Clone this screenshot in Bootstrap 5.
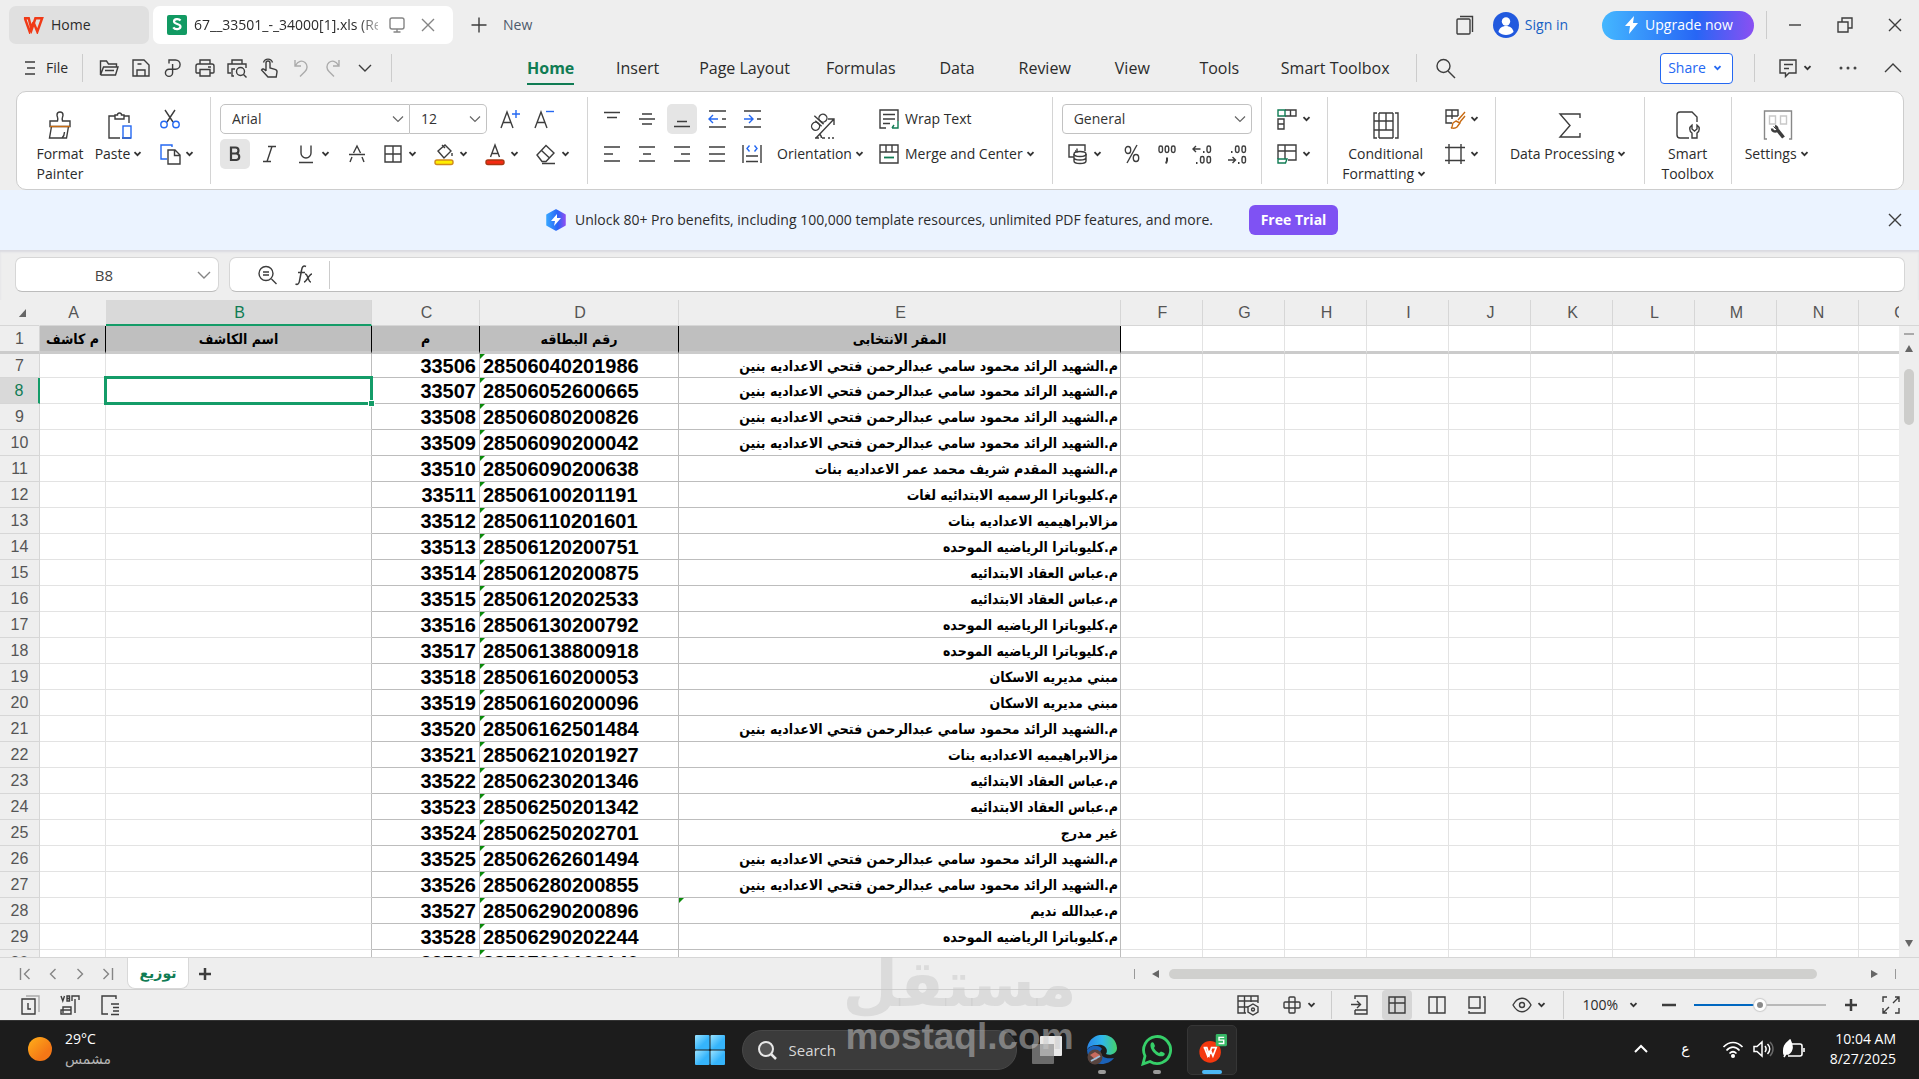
<!DOCTYPE html>
<html lang="en">
<head>
<meta charset="utf-8">
<meta name="viewport" content="width=device-width, initial-scale=1">
<title>Spreadsheet</title>
<link href="https://cdn.jsdelivr.net/npm/bootstrap@5.3.0/dist/css/bootstrap.min.css" rel="stylesheet">
<style>
:root{--ui:"Open Sans","Noto Sans","DejaVu Sans",sans-serif;--ink:#2b2b2b;--green:#107c54;--blue:#2468f2}
body{font:14px/20px var(--ui);color:var(--ink);background:#eee;height:100vh;overflow:hidden}
button{background:none;border:0;padding:0;color:inherit;font:inherit;line-height:20px;white-space:nowrap}
a{color:inherit;text-decoration:none;white-space:nowrap}
svg{display:block;flex:none}
.ic{width:24px;height:24px;fill:none;stroke:currentColor;stroke-width:1.4;color:#3d3d3d}
.ic.big{width:30px;height:30px}
.ic.faint{color:#ababab}
.ic.mid{color:#858585}
.caret{width:15px;height:12px;fill:none;stroke:#333;stroke-width:1.8}
.vsep{width:1px;height:28px;background:#ccc;flex:none}
/* title bar */
.titlebar{height:49px;padding:6px 12px 5px 9px}
.apptab{height:38px;border-radius:7px;background:#e0e0e0;width:140px;padding-left:14px;gap:7px}
.doctab{background:#fff;width:300px}
.docname{width:184px;overflow:hidden;white-space:nowrap;-webkit-mask-image:linear-gradient(90deg,#000 164px,transparent 196px);mask-image:linear-gradient(90deg,#000 164px,transparent 196px)}
.newbtn{color:#4d5a6b;gap:12px;margin-left:14px}
.signin{color:#1660c4;gap:6px;margin:0 34px 0 16px}
.upgrade{height:29px;width:152px;border-radius:15px;color:#fff;background:linear-gradient(90deg,#44b7ff,#2766f5 62%,#8a50f2);margin-right:12px}
.winctl{gap:26px}
/* menu row */
.menurow{height:42px;padding:0 14px 4px 18px}
.menurow>.vsep{margin:0 14px}
.menus{margin-left:101px}
.menuright{gap:21px}
.menuitem{min-width:87px;padding:0 18px;text-align:center;font-size:16px}
.menuitem.active span{font-weight:700;color:var(--green);border-bottom:2px solid var(--green);padding-bottom:4px}
.share{width:73px;height:31px;border:1px solid var(--blue);border-radius:4px;background:#fff;color:var(--blue)}
.share .caret{stroke:var(--blue)}
/* ribbon */
.ribbon{height:99px;margin:0 15px 0 16px;background:#fff;border:1px solid #cdcdcd;border-radius:10px;padding:5px 0}
.grp{border-right:1px solid #d4d4d4;padding-left:13px;padding-right:13px}
.grp.tight{padding-left:9px;padding-right:9px}
.grp.tight.loose{padding-right:14px}
.grp:last-child{border:0}
.bigbtn{display:flex;flex-direction:column;align-items:center;padding-top:13px}
.bigbtn svg.big{margin-bottom:4px}
.w60{min-width:60px}.w88{min-width:90px}.w122{min-width:122px}
.two{display:flex;flex-direction:column;gap:5px;padding-top:7px}
.two>*{height:30px}
.sq{width:30px;height:30px;display:flex;align-items:center;justify-content:center;border-radius:5px}
.sq.on{background:#e5e5e5}
.drop{width:39px;height:30px;display:flex;align-items:center}
.rowgap{display:flex;gap:12px}
.rowgap5{display:flex;gap:5px}
.rowgap10{display:flex;gap:10px}
.combo{height:30px;border:1px solid #c2c2c2;border-radius:5px;font:14px/20px var(--ui);color:#333;padding:0 26px 0 11px;background-color:#fff;background-size:12px 8px;background-position:right 5px center;background-image:url("data:image/svg+xml,%3Csvg xmlns='http://www.w3.org/2000/svg' viewBox='0 0 12 8'%3E%3Cpath d='M1 1.5 6 6.5 11 1.5' fill='none' stroke='%23666' stroke-width='1.2'/%3E%3C/svg%3E")}
.fontcombo{width:190px;border-radius:5px 0 0 5px}
.sizecombo{width:77px;border-left:0;border-radius:0 5px 5px 0}
/* banner */
.banner{height:60px;background:#ebf3ff;padding-right:12px}
.trial{width:89px;height:30px;border-radius:6px;background:#7f52f3;color:#fff;font-weight:700;margin-left:36px}
/* formula bar */
.fbar{height:50px;padding:7px 14px 8px 15px;gap:10px;box-shadow:inset 0 2px 2px #dadae0}
.fbox{background:#fff;border:1px solid #d6d6d6;border-bottom-color:#bcbcbc;border-radius:7px}
.namebox{width:204px}
.namebox input{width:176px;border:0;text-align:center;background:none;outline:0;color:#444;font-size:15px}
.fentry{padding-left:25px;gap:14px}
.fentry input{border:0;outline:0;background:none}
/* sheet */
.sheet{flex:1 1 0;min-height:0;overflow:hidden;border-bottom:1px solid #d6d6d6}
.titlebar,.menurow,.ribbon,.banner,.fbar,.tabsrow,.status,.taskbar{flex:none}
.gridwrap{overflow:hidden;background:#fff}
.gridtab{table-layout:fixed;width:1940px;border-collapse:separate;border-spacing:0}
.gridtab th,.gridtab td{height:26px;padding:0;border-right:1px solid #e3e3e3;border-bottom:1px solid #e3e3e3;line-height:24px;white-space:nowrap;overflow:hidden}
.gridtab thead th,.gridtab tbody th{background:#eee;color:#555;font:400 16px/24px "Liberation Sans",sans-serif;text-align:center;border-color:#d6d6d6}
.gridtab thead th{padding-left:2px;padding-top:1px}
.gridtab thead th:nth-child(-n+2){border-right-color:#eee}
.gridtab thead th.cur{background:#d9d9d9;color:var(--green);border-bottom:2px solid #149c68;line-height:23px}
.gridtab tbody th.cur{background:#d9d9d9;color:var(--green);border-right:2px solid #149c68}
.gridtab tr.frozen>*{height:28px;border-bottom:3px solid #cbcbcb}
.gridtab tr.frozen td.hd{background:#bfbfbf;border-right-color:#000;text-align:center;color:#000}
.gridtab tr.cut>*{height:24px;line-height:22px}
.gridtab td.n,.gridtab td.id{font:700 20px/22px "Liberation Sans",sans-serif;color:#000;border-color:#bdbdbd}
.gridtab td.n{text-align:right;padding-right:3px}
.gridtab td.id{padding-left:3px;position:relative}
.gridtab td.ar{border-color:#bdbdbd;padding-right:2px;text-align:right;position:relative}
.arab{font:700 14px/22px "DejaVu Sans Condensed","DejaVu Sans",sans-serif;color:#000}
.gridtab td.b{border-right-color:#bdbdbd}
.flag::before{content:"";position:absolute;left:0;top:0;border-top:5px solid #0a8a0a;border-right:5px solid transparent}
.gridtab td.sel{overflow:visible;position:relative}
.sel::before{content:"";position:absolute;inset:-2px;border:3px solid #149c68}
.sel::after{content:"";position:absolute;right:-4px;bottom:-4px;background:#149c68;border:1px solid #fff;box-sizing:content-box;width:5px;height:5px}
.vscroll{width:20px;flex:none;padding-top:25px}
.vthumb{width:10px;height:56px;border-radius:5px;background:#cdcdcb}
/* sheet tabs */
.tabsrow{height:32px;border-bottom:1px solid #cfcfcf;padding:0 23px 0 14px}
.sheetnav{gap:3px}
.sheettab{width:62px;height:31px;background:#fff;border:1px solid #d8d8d8;border-top:0;border-radius:0 0 8px 8px;color:var(--green);font:700 14px/28px "DejaVu Sans",sans-serif}
.hthumb{width:648px;height:10px;border-radius:5px;background:#d0d0ce}
.tri{width:10px;height:10px;fill:#666}
/* status bar */
.status{height:30px;padding:0 16px 0 18px}
.views{gap:10px}
.zoomr{-webkit-appearance:none;appearance:none;width:132px;height:14px;margin:0 13px;background:linear-gradient(#0067c0,#0067c0) 0 50%/66px 2px no-repeat,linear-gradient(#b9b9b9,#b9b9b9) 0 50%/100% 2px no-repeat}
.zoomr::-webkit-slider-thumb{-webkit-appearance:none;width:12px;height:12px;border-radius:50%;background:#8a8a8a;border:3px solid #fff;box-shadow:0 0 1px 1px #ccc}
.viewbtn{width:30px;height:30px;display:flex;align-items:center;justify-content:center}
.viewbtn.on{background:#d6d6d6;border-radius:4px}
/* taskbar */
.taskbar{height:59px;background:#1c1c1c;border-top:1px solid #333;color:#fff;position:relative}
.weather{padding-left:27px;gap:12px;position:absolute;left:0;top:8px}
.weather .cond{color:#b5b5b5}
.dock{padding-left:12px;gap:5px}
.searchpill{width:275px;height:40px;border-radius:20px;background:#3b3b3b;border:1px solid #484848;margin-left:12px;padding-left:12px;gap:8px}
.searchpill input{border:0;background:none;outline:0;color:#d8d8d8;font-size:15px;width:150px}
.searchpill input::placeholder{color:#d8d8d8;opacity:1}
.app{width:50px;height:50px;display:flex;align-items:center;justify-content:center;position:relative;border-radius:5px}
.app.on{background:#292929;border:1px solid #363636}
.app i{position:absolute;bottom:1px;width:8px;height:4px;border-radius:2px;background:#9a9a9a}
.app.on i{width:20px;background:#4cb8f5;bottom:0}
.tray{position:absolute;right:23px;top:8px}
.wmark{position:absolute;left:50%;bottom:20px;transform:translateX(-50%);color:rgba(200,200,200,.5);text-align:center;pointer-events:none;z-index:5}
.wm1{font:700 64px/62px "DejaVu Sans",sans-serif}
.wm2{font:700 37px/44px "Liberation Sans",sans-serif}
</style>
</head>
<body class="d-flex flex-column position-relative">
<svg width="0" height="0" class="position-absolute" aria-hidden="true"><defs>
<linearGradient id="gb" x1="0" x2="1"><stop stop-color="#36a3ff"/><stop offset=".6" stop-color="#2b62f6"/><stop offset="1" stop-color="#8950f2"/></linearGradient>
<linearGradient id="gw" x1="0" y1="0" x2="1" y2="1"><stop stop-color="#9be3ff"/><stop offset=".6" stop-color="#35b4fb"/></linearGradient>
<linearGradient id="gs" x1="0" y1="0" x2="1" y2="1"><stop stop-color="#ffb01a"/><stop offset=".7" stop-color="#f47716"/></linearGradient>
<linearGradient id="ge" x1="0" y1="0" x2="1" y2="0"><stop stop-color="#2a86e8"/><stop offset=".5" stop-color="#2fb6ec"/><stop offset="1" stop-color="#45d26a"/></linearGradient>
<symbol id="car" viewBox="0 0 15 12"><path d="M4.500 4.200 7.500 7.200 10.500 4.200"/></symbol>
<symbol id="x" viewBox="0 0 24 24"><path d="M6 6 18 18M18 6 6 18"/></symbol>
<symbol id="plus" viewBox="0 0 24 24"><path d="M12 4.500V19.500M4.500 12H19.500"/></symbol>
<symbol id="minus" viewBox="0 0 24 24"><path d="M6 12H18"/></symbol>
<symbol id="mon" viewBox="0 0 24 24"><rect x="5" y="5" width="14" height="11" rx="2"/><path d="M12 16v3M8.500 19h7"/></symbol>
<symbol id="burger" viewBox="0 0 24 24"><path d="M7 6H17M9 12H17M7 18H17"/></symbol>
<symbol id="open" viewBox="0 0 24 24"><path d="M3.500 19V5h6l2 3h8v3M3.500 19l3-8H21l-2.500 8H3.500M8 14.500h9"/></symbol>
<symbol id="save" viewBox="0 0 24 24"><path d="M9 20H4V4h11l5 5v11h-3M8.500 8h4M8 20v-6h8v6zM20 20h-4"/></symbol>
<symbol id="pdf" viewBox="0 0 24 24"><path d="M8 7.500V4h6.500a4.600 4.600 0 0 1 0 9.200H8a3.600 3.600 0 1 0 3.600 3.600V13M11.600 13V8"/></symbol>
<symbol id="print" viewBox="0 0 24 24"><path d="M7 8V4h10v4M7 17H4a1 1 0 0 1-1-1V10a2 2 0 0 1 2-2h14a2 2 0 0 1 2 2v6a1 1 0 0 1-1 1h-3M7 13.500h10V20H7zM15 11h3"/></symbol>
<symbol id="preview" viewBox="0 0 24 24"><path d="M7 8V4h10v4M6 17H3V8h18v4M9 20H7v-7h3"/><circle cx="15.500" cy="15.500" r="4"/><path d="m18.500 18.500 3 3"/></symbol>
<symbol id="hand" viewBox="0 0 24 24"><path d="M9 15V7a2 2 0 0 1 4 0v5l5 1.300c1.600.5 2.200 1.400 2 2.700l-.8 5H11L4.500 14c1-1.600 2.600-1.300 4.500 1M6.500 6.500a4.700 4.700 0 0 1 9 0"/></symbol>
<symbol id="undo" viewBox="0 0 24 24"><path d="M6 4v6h6M6.500 9.500C9 5 13 4 16 6.500s2.500 6.500 0 9l-5 5"/></symbol>
<symbol id="redo" viewBox="0 0 24 24"><path d="M18 4v6h-6M17.500 9.500C15 5 11 4 8 6.500s-2.500 6.500 0 9l5 5"/></symbol>
<symbol id="chev" viewBox="0 0 24 24"><path d="m6 9 6 6 6-6"/></symbol>
<symbol id="chevu" viewBox="0 0 24 24"><path d="m4 16 8-8 8 8"/></symbol>
<symbol id="search" viewBox="0 0 24 24"><circle cx="10.500" cy="10" r="6.500"/><path d="m15 15 7 7"/></symbol>
<symbol id="comment" viewBox="0 0 24 24"><path d="M4 4h16v13h-7l-3.500 3.500V17H4zM8 8.500h9M8 12.500h5"/></symbol>
<symbol id="win" viewBox="0 0 24 24"><path d="M5 9h10v10H5zM9 9V5h10v10h-4"/></symbol>
<symbol id="pages" viewBox="0 0 24 24"><rect x="4" y="6" width="13" height="15" rx="1"/><path d="M7 3.500h12.500V19"/></symbol>
<symbol id="brush" viewBox="0 0 30 30"><path d="M12.500 11c1-4-.5-4-.5-6a3 3 0 0 1 6 0c0 2-1.500 2-.5 6h7.500v5.500H5V11zM6.500 16.500 4.500 28h17l2-11.500M17 28c2-2 2.500-4 2.500-6"/><path d="M5 16.500h20" stroke="#c76a12"/></symbol>
<symbol id="paste" viewBox="0 0 30 30"><path d="M10 6H4v22h11M19 6h5v7M10 9V5h2.500a2 2 0 0 1 4 0H19v4zM17 28h9"/><rect x="18" y="16" width="8" height="12" stroke="#2468f2"/></symbol>
<symbol id="cut" viewBox="0 0 24 24"><path d="M7 3 15 15M17 3 9 15"/><g stroke="#2468f2"><circle cx="6" cy="17.500" r="3.200"/><circle cx="18" cy="17.500" r="3.200"/></g></symbol>
<symbol id="copy" viewBox="0 0 24 24"><path d="M14 5V3H3v14h6" stroke="#2468f2"/><path d="M10 8h7l5 5v9H10zM16.500 8v5.500H22"/></symbol>
<symbol id="ap" viewBox="0 0 24 24"><path d="m3 21 6-16 6 16M5 15.500h8"/><path d="M18 3v8M14 7h8" stroke="#2468f2"/></symbol>
<symbol id="am" viewBox="0 0 24 24"><path d="m3 21 6-16 6 16M5 15.500h8"/><path d="M14 4.500h8" stroke="#2468f2"/></symbol>
<symbol id="bold" viewBox="0 0 24 24"><path d="M8 5.500h4.500a3 3 0 0 1 0 6H8zM8 11.500h5.500a3.300 3.300 0 0 1 0 6.500H8z" stroke-width="2.200"/></symbol>
<symbol id="ital" viewBox="0 0 24 24"><path d="M10 4.500h8M5 19.500h8M14 4.500l-5 15"/></symbol>
<symbol id="und" viewBox="0 0 24 24"><path d="M7 3.500V11a5 5 0 0 0 10 0V3.500M5 20.500h14"/></symbol>
<symbol id="strike" viewBox="0 0 24 24"><path d="m8.500 11 3.500-7 3.500 7M4 12.500h16M7 15l-2 5M17 15l2 5"/></symbol>
<symbol id="bord" viewBox="0 0 24 24"><path d="M4 4h16v16H4zM12 4v16M4 12h16"/></symbol>
<symbol id="fill" viewBox="0 0 24 24"><path d="m6 9 7-6 6 6-7 7zM10 3l3 3M20 11v3"/><rect x="3" y="18" width="18" height="4.500" rx="2" fill="#ffee00" stroke="#cf8a1c"/></symbol>
<symbol id="fcol" viewBox="0 0 24 24"><path d="m7.500 15 4.500-12 4.500 12M9 11.500h6"/><rect x="3" y="18" width="18" height="4.500" rx="2" fill="#f42a12" stroke="#a83611"/></symbol>
<symbol id="erase" viewBox="0 0 24 24"><path d="m3 13 9-9.500 8 7.500-8 8.500H8zM7.500 8.500l8 7.500M8 21.500h13"/></symbol>
<symbol id="vt" viewBox="0 0 24 24"><path d="M4 5.500h16M7 10.500h10"/></symbol>
<symbol id="vm" viewBox="0 0 24 24"><path d="M7 7h10M4 12h16M7 17h10"/></symbol>
<symbol id="vb" viewBox="0 0 24 24"><path d="M7 14.500h10M4 19.500h16"/></symbol>
<symbol id="ind" viewBox="0 0 24 24"><path d="M4 4h17M4 20h17M17 12h4"/><path d="M13 12H4M8 8l-4 4 4 4" stroke="#2468f2"/></symbol>
<symbol id="ind2" viewBox="0 0 24 24"><path d="M4 4h17M4 20h17M17 12h4"/><path d="M4 12h9M9 8l4 4-4 4" stroke="#2468f2"/></symbol>
<symbol id="al" viewBox="0 0 24 24"><path d="M4 5h16M4 12h9M4 19h16"/></symbol>
<symbol id="ac" viewBox="0 0 24 24"><path d="M4 5h16M8 12h8M4 19h16"/></symbol>
<symbol id="arr" viewBox="0 0 24 24"><path d="M4 5h16M11 12h9M4 19h16"/></symbol>
<symbol id="aj" viewBox="0 0 24 24"><path d="M4 5h16M4 12h16M4 19h16"/></symbol>
<symbol id="dist" viewBox="0 0 24 24"><path d="M3 3v18M21 3v18M6 14h12M6 19.500h12"/><path d="M9.500 3.500 7 6.500l2.500 3M14.500 3.500l2.500 3-2.500 3" stroke="#2468f2"/></symbol>
<symbol id="orient" viewBox="0 0 30 30"><g transform="rotate(-48 12 14)"><circle cx="8" cy="13" r="4"/><path d="M12 9v8.500"/><circle cx="19" cy="13" r="4"/><path d="M15 5v12.500"/></g><path d="M9 28 27 9M21 9h6v6M8 28h4M15 28h3M21 28h2M25 28h2M12 24c2 1 2.500 2 2.500 4"/></symbol>
<symbol id="wrap" viewBox="0 0 24 24"><path d="M9 21H3V3h18v11M6 7.500h12M6 12h12M6 16.500h7"/><path d="M21 14v7h-6M17 18l-2 3" stroke="#107c54"/></symbol>
<symbol id="merge" viewBox="0 0 24 24"><path d="M3 3h18v18H3zM3 10h18M9 3v7M15 3v7"/><path d="M7 15.500h10" stroke="#107c54" stroke-width="1.800"/></symbol>
<symbol id="money" viewBox="0 0 24 24"><path d="M8 15H3V3h16v6"/><path d="M9 9h1M11 6.500v4"/><ellipse cx="14" cy="12" rx="6" ry="2.500"/><path d="M8 12v7c0 3.300 12 3.300 12 0v-7M8 15.500c0 3.300 12 3.300 12 0"/></symbol>
<symbol id="pct" viewBox="0 0 24 24"><ellipse cx="8" cy="8" rx="2.700" ry="3.500"/><ellipse cx="16" cy="16" rx="2.700" ry="3.500"/><path d="M17 3 7 21"/></symbol>
<symbol id="k" viewBox="0 0 24 24"><rect x="4" y="4" width="3.500" height="6.500" rx="1.700"/><rect x="10.200" y="4" width="3.500" height="6.500" rx="1.700"/><rect x="16.500" y="4" width="3.500" height="6.500" rx="1.700"/><path d="M12 15.500v3l-1 3" stroke-width="2"/></symbol>
<symbol id="dinc" viewBox="0 0 24 24"><path d="M10.500 7H3M6 4 3 7l3 3"/><path d="M13 10h1.500M6 21h1.500" stroke-width="2"/><rect x="17" y="4" width="3.500" height="6.500" rx="1.700"/><rect x="10.500" y="14.500" width="3.500" height="6.500" rx="1.700"/><rect x="17" y="14.500" width="3.500" height="6.500" rx="1.700"/></symbol>
<symbol id="ddec" viewBox="0 0 24 24"><path d="M3 18h7.500M7.500 15l3 3-3 3"/><path d="M13 21h1.500M6 10h1.500" stroke-width="2"/><rect x="17" y="14.500" width="3.500" height="6.500" rx="1.700"/><rect x="10.500" y="4" width="3.500" height="6.500" rx="1.700"/><rect x="17" y="4" width="3.500" height="6.500" rx="1.700"/></symbol>
<symbol id="rc" viewBox="0 0 24 24"><path d="M10 3h11v6H10M15.500 3v6M3 12h6v10H3zM3 17h6"/><path d="M3 3h7v6H3z" stroke="#107c54"/></symbol>
<symbol id="sheetop" viewBox="0 0 24 24"><path d="M3 17V3h18v15h-8M3 9h18M10 3v14"/><path d="M3 17h9l-1.500 4H3z" stroke="#107c54"/></symbol>
<symbol id="cond" viewBox="0 0 30 30"><path d="M8 3v25M22 3v25M8 3h14M8 28h14M8 11h14M8 20h14M15 3v8M15 11v9M6 3H3v25h3M3 11h5M3 20h5M24 3h3v25h-3"/></symbol>
<symbol id="cstyle" viewBox="0 0 24 24"><path d="M9 16H3V3h12v6M3 9h12M9 3v9"/><path d="M22 5l-7 8M13 14l4 2-3 4c-2 2-4 1-6 1 2-1 1-3 2-5zM22 9l-5 6" stroke="#c76a12"/></symbol>
<symbol id="frame" viewBox="0 0 24 24"><path d="M6 2v20M18 2v20M2 5.500h20M2 18.500h20"/></symbol>
<symbol id="sigma" viewBox="0 0 30 30"><path d="M25 8V4H5l10 11.500L5 27h20v-4"/></symbol>
<symbol id="stool" viewBox="0 0 30 30"><path d="M16 28H7a3 3 0 0 1-3-3V5a3 3 0 0 1 3-3h12l5 5v5"/><path d="M19 15v4l2.500 2 2.500-2v-4c3 2 3 6 0 8v5h-5v-5c-3-2-3-6 0-8z"/></symbol>
<symbol id="sett" viewBox="0 0 30 30"><path d="M4 29H1.500V1h27v28H26" stroke="#888"/><path d="M6.500 6h6v8h-6zM17.500 6h6v8h-6z" stroke="#c8c8c8"/><path d="m14.500 20 6 7.500" stroke-width="3.500"/><path d="M10.500 16.500l3 3" stroke-width="1"/><path d="M9 18.500c0 2.500 2.500 3.500 5 2.500 1-2 .5-4-2-5" stroke-width="2.500"/></symbol>
<symbol id="fmag" viewBox="0 0 24 24"><circle cx="11" cy="10.500" r="7"/><path d="m16.500 16 5 5M8 9h6M8 12h6"/></symbol>
<symbol id="first" viewBox="0 0 24 24"><path d="M6.500 6v12M15.500 7l-5 5 5 5"/></symbol>
<symbol id="prev" viewBox="0 0 24 24"><path d="m14.500 7-5 5 5 5"/></symbol>
<symbol id="next" viewBox="0 0 24 24"><path d="m9.500 7 5 5-5 5"/></symbol>
<symbol id="last" viewBox="0 0 24 24"><path d="M17.500 6v12M8.500 7l5 5-5 5"/></symbol>
<symbol id="s1" viewBox="0 0 24 24"><path d="M8 3h13v16" stroke="#aaa"/><path d="M4 6h13v15H4zM10 10v6h3"/></symbol>
<symbol id="s2" viewBox="0 0 24 24"><path d="m3 3 1.800 5L6.500 3M9 3h2.500v5H9zM9 5.500h2.500M14 8V3h7v4M17 6v14M5 20v-6h8v7H3v-4h10"/></symbol>
<symbol id="s3" viewBox="0 0 24 24"><path d="M18 6V3H4v18h6M13 11h8M15 14.500h6M15 18h6M13 21.500h8"/></symbol>
<symbol id="r1" viewBox="0 0 24 24"><path d="M10 20H2V3h20v7M2 8h20M2 14h10M8.500 3v17M15 3v6"/><path d="m17 11 5 3v5l-5 3-5-3v-5z"/><circle cx="17" cy="16.500" r="1.500"/></symbol>
<symbol id="r2" viewBox="0 0 24 24"><rect x="9" y="4" width="6" height="16" rx="1"/><rect x="4" y="9" width="16" height="6" rx="1"/></symbol>
<symbol id="r3" viewBox="0 0 24 24"><path d="M7 6V3h12v18H7v-4M7 17h12M3 11.500h9M9 8l3.500 3.500L9 15"/></symbol>
<symbol id="v1" viewBox="0 0 24 24"><path d="M4 4h16v16H4zM4 10h16M10 4v16"/></symbol>
<symbol id="v2" viewBox="0 0 24 24"><path d="M4 4h16v16H4zM12 4v16"/></symbol>
<symbol id="v3" viewBox="0 0 24 24"><path d="M4 4h11v11H4zM18 4h2v16H4v-2"/></symbol>
<symbol id="eye" viewBox="0 0 24 24"><path d="M3 12c5-9 13-9 18 0-5 9-13 9-18 0z"/><circle cx="12" cy="12" r="2.500"/></symbol>
<symbol id="full" viewBox="0 0 24 24"><path d="M4 9V4h4M16 4h4v5M4 15v5h4M16 20h4v-5M14 10l6-6M10 14l-6 6"/></symbol>
</defs></svg>

<header class="titlebar d-flex align-items-center">
  <a href="#" class="apptab d-flex align-items-center"><svg width="21" height="18" viewBox="0 0 22 18" fill="none" stroke="#f03a17" stroke-width="2.600"><path d="M1 2h5l3 12L13 2h7l-5 14-4-10M2 2l5 14 4-10"/></svg><span>Home</span></a>
  <div class="apptab doctab d-flex align-items-center ms-1">
    <svg width="20" height="20" viewBox="0 0 20 20"><rect width="20" height="20" rx="2" fill="#129a63"/><path d="M13.500 5.500C12 3.500 7 3.500 7 6.500s6.500 2 6.500 5-5.500 3.500-7.200.8" fill="none" stroke="#fff" stroke-width="2.200"/></svg>
    <span class="docname">67__33501_-_34000[1].xls (Re</span>
    <svg class="ic mid"><use href="#mon"/></svg>
    <button aria-label="Close tab"><svg class="ic mid"><use href="#x"/></svg></button>
  </div>
  <button class="newbtn d-flex align-items-center"><svg class="ic" stroke-width="2"><use href="#plus"/></svg>New</button>
  <div class="d-flex align-items-center ms-auto">
    <button aria-label="Windows"><svg class="ic"><use href="#pages"/></svg></button>
    <button class="signin d-flex align-items-center"><svg width="26" height="26" viewBox="0 0 26 26"><circle cx="13" cy="13" r="13" fill="#2159de"/><circle cx="13" cy="9.500" r="4.200" fill="#fff"/><path d="M5.500 20c1-8 14-8 15 0-4 4-11 4-15 0z" fill="#fff"/></svg>Sign in</button>
    <button class="upgrade d-flex align-items-center justify-content-center gap-1"><svg width="18" height="18" viewBox="0 0 18 18"><path d="M11 0 2 10h5L6 18l9-11h-5z" fill="#fff"/></svg>Upgrade now</button>
    <div class="vsep me-3"></div>
    <div class="winctl d-flex">
      <button aria-label="Minimize"><svg class="ic"><use href="#minus"/></svg></button>
      <button aria-label="Restore"><svg class="ic"><use href="#win"/></svg></button>
      <button aria-label="Close"><svg class="ic"><use href="#x"/></svg></button>
    </div>
  </div>
</header>

<nav class="menurow d-flex align-items-center">
  <button class="d-flex align-items-center"><svg class="ic me-1"><use href="#burger"/></svg>File</button>
  <div class="vsep"></div>
  <div class="d-flex gap-2">
    <button aria-label="Open"><svg class="ic"><use href="#open"/></svg></button>
    <button aria-label="Save"><svg class="ic"><use href="#save"/></svg></button>
    <button aria-label="Export PDF"><svg class="ic"><use href="#pdf"/></svg></button>
    <button aria-label="Print"><svg class="ic"><use href="#print"/></svg></button>
    <button aria-label="Preview"><svg class="ic"><use href="#preview"/></svg></button>
    <button aria-label="Touch"><svg class="ic"><use href="#hand"/></svg></button>
    <button aria-label="Undo"><svg class="ic faint"><use href="#undo"/></svg></button>
    <button aria-label="Redo"><svg class="ic faint"><use href="#redo"/></svg></button>
    <button aria-label="More"><svg class="ic"><use href="#chev"/></svg></button>
  </div>
  <div class="vsep"></div>
  <div class="menus d-flex align-items-center">
    <a href="#" class="menuitem active"><span>Home</span></a><a href="#" class="menuitem">Insert</a><a href="#" class="menuitem">Page Layout</a><a href="#" class="menuitem">Formulas</a><a href="#" class="menuitem">Data</a><a href="#" class="menuitem">Review</a><a href="#" class="menuitem">View</a><a href="#" class="menuitem">Tools</a><a href="#" class="menuitem">Smart Toolbox</a>
    <div class="vsep ms-2 me-3"></div>
    <button aria-label="Search"><svg class="ic"><use href="#search"/></svg></button>
  </div>
  <div class="menuright d-flex align-items-center ms-auto">
    <button class="share d-flex align-items-center justify-content-center gap-1">Share<svg class="caret"><use href="#car"/></svg></button>
    <div class="vsep"></div>
    <button class="drop" aria-label="Comments"><svg class="ic"><use href="#comment"/></svg><svg class="caret"><use href="#car"/></svg></button>
    <button aria-label="More options"><svg width="24" height="24" viewBox="0 0 24 24" fill="#444"><circle cx="5" cy="12" r="1.500"/><circle cx="12" cy="12" r="1.500"/><circle cx="19" cy="12" r="1.500"/></svg></button>
    <button aria-label="Collapse ribbon"><svg class="ic"><use href="#chevu"/></svg></button>
  </div>
</nav>

<section class="ribbon d-flex">
  <div class="grp d-flex">
    <button class="bigbtn w60"><svg class="ic big"><use href="#brush"/></svg><span>Format<br>Painter</span></button>
    <button class="bigbtn w60"><svg class="ic big"><use href="#paste"/></svg><span class="d-flex align-items-center">Paste<svg class="caret"><use href="#car"/></svg></span></button>
    <div class="two ms-2">
      <button aria-label="Cut"><svg class="ic"><use href="#cut"/></svg></button>
      <button class="drop" aria-label="Copy"><svg class="ic"><use href="#copy"/></svg><svg class="caret"><use href="#car"/></svg></button>
    </div>
  </div>
  <div class="grp tight loose two">
    <div class="d-flex">
      <select class="form-select combo fontcombo" aria-label="Font"><option>Arial</option></select>
      <select class="form-select combo sizecombo" aria-label="Size"><option>12</option></select>
      <button class="sq ms-2" aria-label="Grow font"><svg class="ic"><use href="#ap"/></svg></button>
      <button class="sq ms-1" aria-label="Shrink font"><svg class="ic"><use href="#am"/></svg></button>
    </div>
    <div class="rowgap">
      <div class="d-flex gap-2"><button class="sq on" aria-label="Bold"><svg class="ic"><use href="#bold"/></svg></button><button aria-label="Italic"><svg class="ic"><use href="#ital"/></svg></button></div>
      <button class="drop" aria-label="Underline"><svg class="ic"><use href="#und"/></svg><svg class="caret"><use href="#car"/></svg></button>
      <button aria-label="Strikethrough"><svg class="ic"><use href="#strike"/></svg></button>
      <button class="drop" aria-label="Borders"><svg class="ic"><use href="#bord"/></svg><svg class="caret"><use href="#car"/></svg></button>
      <button class="drop" aria-label="Fill colour"><svg class="ic"><use href="#fill"/></svg><svg class="caret"><use href="#car"/></svg></button>
      <button class="drop" aria-label="Font colour"><svg class="ic"><use href="#fcol"/></svg><svg class="caret"><use href="#car"/></svg></button>
      <button class="drop" aria-label="Clear"><svg class="ic"><use href="#erase"/></svg><svg class="caret"><use href="#car"/></svg></button>
    </div>
  </div>
  <div class="grp tight loose rowgap10">
    <div class="two">
      <div class="rowgap5"><button class="sq" aria-label="Top"><svg class="ic"><use href="#vt"/></svg></button><button class="sq" aria-label="Middle"><svg class="ic"><use href="#vm"/></svg></button><button class="sq on" aria-label="Bottom"><svg class="ic"><use href="#vb"/></svg></button><button class="sq" aria-label="Outdent"><svg class="ic"><use href="#ind"/></svg></button><button class="sq" aria-label="Indent"><svg class="ic"><use href="#ind2"/></svg></button></div>
      <div class="rowgap5"><button class="sq" aria-label="Left"><svg class="ic"><use href="#al"/></svg></button><button class="sq" aria-label="Center"><svg class="ic"><use href="#ac"/></svg></button><button class="sq" aria-label="Right"><svg class="ic"><use href="#arr"/></svg></button><button class="sq" aria-label="Justify"><svg class="ic"><use href="#aj"/></svg></button><button class="sq" aria-label="Distribute"><svg class="ic"><use href="#dist"/></svg></button></div>
    </div>
    <button class="bigbtn w88"><svg class="ic big"><use href="#orient"/></svg><span class="d-flex align-items-center">Orientation<svg class="caret"><use href="#car"/></svg></span></button>
    <div class="two">
      <button class="d-flex align-items-center"><svg class="ic me-1"><use href="#wrap"/></svg>Wrap Text</button>
      <button class="d-flex align-items-center"><svg class="ic me-1"><use href="#merge"/></svg>Merge and Center<svg class="caret"><use href="#car"/></svg></button>
    </div>
  </div>
  <div class="grp tight two">
    <select class="form-select combo fontcombo rounded-1" aria-label="Number format"><option>General</option></select>
    <div class="rowgap5"><button class="drop me-auto ms-1" aria-label="Currency"><svg class="ic"><use href="#money"/></svg><svg class="caret"><use href="#car"/></svg></button><button class="sq" aria-label="Percent"><svg class="ic"><use href="#pct"/></svg></button><button class="sq" aria-label="Comma style"><svg class="ic"><use href="#k"/></svg></button><button class="sq" aria-label="Increase decimal"><svg class="ic"><use href="#dinc"/></svg></button><button class="sq" aria-label="Decrease decimal"><svg class="ic"><use href="#ddec"/></svg></button></div>
  </div>
  <div class="grp two">
    <button class="drop" aria-label="Rows and columns"><svg class="ic"><use href="#rc"/></svg><svg class="caret"><use href="#car"/></svg></button>
    <button class="drop" aria-label="Worksheet"><svg class="ic"><use href="#sheetop"/></svg><svg class="caret"><use href="#car"/></svg></button>
  </div>
  <div class="grp rowgap">
    <button class="bigbtn w88"><svg class="ic big"><use href="#cond"/></svg><span>Conditional</span><span class="d-flex align-items-center">Formatting<svg class="caret"><use href="#car"/></svg></span></button>
    <div class="two">
      <button class="drop" aria-label="Cell styles"><svg class="ic"><use href="#cstyle"/></svg><svg class="caret"><use href="#car"/></svg></button>
      <button class="drop" aria-label="Format cells"><svg class="ic"><use href="#frame"/></svg><svg class="caret"><use href="#car"/></svg></button>
    </div>
  </div>
  <div class="grp"><button class="bigbtn w122"><svg class="ic big"><use href="#sigma"/></svg><span class="d-flex align-items-center">Data Processing<svg class="caret"><use href="#car"/></svg></span></button></div>
  <div class="grp"><button class="bigbtn w60"><svg class="ic big"><use href="#stool"/></svg><span>Smart<br>Toolbox</span></button></div>
  <div class="grp"><button class="bigbtn w60"><svg class="ic big"><use href="#sett"/></svg><span class="d-flex align-items-center">Settings<svg class="caret"><use href="#car"/></svg></span></button></div>
</section>

<section class="banner d-flex align-items-center">
  <div class="d-flex align-items-center mx-auto">
    <svg class="me-2" width="22" height="22" viewBox="0 0 22 22"><path d="M11 1 20 6v10l-9 5-9-5V6z" fill="url(#gb)" stroke="url(#gb)" stroke-width="1.500" stroke-linejoin="round"/><path d="m12 5-6 7h4l-1 5 7-8h-4z" fill="#fff"/></svg>
    <span>Unlock 80+ Pro benefits, including 100,000 template resources, unlimited PDF features, and more.</span>
    <button class="trial">Free Trial</button>
  </div>
  <button aria-label="Dismiss"><svg class="ic"><use href="#x"/></svg></button>
</section>

<section class="fbar d-flex">
  <div class="fbox namebox d-flex align-items-center"><input value="B8" aria-label="Name box"><svg class="ic mid"><use href="#chev"/></svg></div>
  <div class="fbox fentry flex-fill d-flex align-items-center">
    <svg class="ic"><use href="#fmag"/></svg>
    <svg width="22" height="24" viewBox="0 0 22 24" fill="none" stroke="#3d3d3d" stroke-width="1.500"><path d="M13 3.500c-3-1.500-4 1-4.500 4L6.500 18c-.5 3-2 4-4 3M5 9.500h7M12 11c3-.5 3 8 6 8M19 11c-3 0-5 7.500-8 8"/></svg>
    <div class="vsep"></div>
    <input class="flex-fill" aria-label="Formula">
  </div>
</section>

<main class="sheet d-flex">
  <div class="gridwrap flex-fill">
    <table class="gridtab">
      <colgroup id="cols"></colgroup>
      <thead><tr id="letters"></tr></thead>
      <tbody id="rows"></tbody>
    </table>
  </div>
  <div class="vscroll d-flex flex-column align-items-center">
    <svg width="20" height="10" viewBox="0 0 20 10"><path d="M0 .5h20" stroke="#d6d6d6"/><path d="M5 9h10" stroke="#aaa" stroke-width="2"/></svg>
    <svg class="tri mt-2 mb-3" viewBox="0 0 10 10"><path d="M5 2 9 9H1z"/></svg>
    <div class="vthumb"></div>
    <svg class="tri mt-auto mb-2" viewBox="0 0 10 10"><path d="M5 8 9 1H1z"/></svg>
  </div>
</main>

<section class="tabsrow d-flex align-items-center">
  <div class="sheetnav d-flex me-2">
    <button aria-label="First sheet"><svg class="ic mid"><use href="#first"/></svg></button><button aria-label="Previous sheet"><svg class="ic mid"><use href="#prev"/></svg></button><button aria-label="Next sheet"><svg class="ic mid"><use href="#next"/></svg></button><button aria-label="Last sheet"><svg class="ic mid"><use href="#last"/></svg></button>
  </div>
  <button class="sheettab" dir="rtl">توزيع</button>
  <button class="ms-1" aria-label="Add sheet"><svg class="ic" viewBox="0 0 24 24"><path d="M12 6v12M6 12h12" stroke-width="2.500"/></svg></button>
  <div class="d-flex align-items-center ms-auto">
    <svg width="1" height="10"><path d="M.5 0v10" stroke="#999"/></svg>
    <svg class="tri ms-3 me-2" viewBox="0 0 10 10"><path d="M1 5 8 1v8z"/></svg>
    <div class="hthumb me-5"></div>
    <svg class="tri ms-1 me-3" viewBox="0 0 10 10"><path d="M9 5 2 1v8z"/></svg>
    <svg width="1" height="10"><path d="M.5 0v10" stroke="#999"/></svg>
  </div>
</section>

<footer class="status d-flex align-items-center">
  <button class="me-3" aria-label="History"><svg class="ic"><use href="#s1"/></svg></button>
  <button class="me-3" aria-label="Macro"><svg class="ic"><use href="#s2"/></svg></button>
  <button aria-label="Outline"><svg class="ic"><use href="#s3"/></svg></button>
  <div class="d-flex align-items-center ms-auto">
    <button class="me-3" aria-label="Table settings"><svg class="ic"><use href="#r1"/></svg></button>
    <button class="drop ms-1 me-2" aria-label="Reading layout"><svg class="ic"><use href="#r2"/></svg><svg class="caret"><use href="#car"/></svg></button>
    <div class="vsep ms-1 me-3"></div>
    <div class="views d-flex align-items-center">
      <button aria-label="Mobile"><svg class="ic"><use href="#r3"/></svg></button>
      <button class="viewbtn on" aria-label="Normal view"><svg class="ic"><use href="#v1"/></svg></button>
      <button class="viewbtn" aria-label="Page view"><svg class="ic"><use href="#v2"/></svg></button>
      <button class="viewbtn" aria-label="Page breaks"><svg class="ic"><use href="#v3"/></svg></button>
      <button class="drop ms-2 me-1" aria-label="Eye care"><svg class="ic"><use href="#eye"/></svg><svg class="caret"><use href="#car"/></svg></button>
      <div class="vsep me-2"></div>
      <button class="d-flex align-items-center gap-2">100%<svg class="caret"><use href="#car"/></svg></button>
    </div>
    <button class="ms-3" aria-label="Zoom out"><svg class="ic"><path d="M5 12h14" stroke-width="2.500"/></svg></button>
    <input type="range" class="zoomr" min="0" max="100" value="50" aria-label="Zoom">
    <button aria-label="Zoom in"><svg class="ic"><path d="M6 12h12M12 6v12" stroke-width="2.500"/></svg></button>
    <button class="ms-3" aria-label="Full screen"><svg class="ic"><use href="#full"/></svg></button>
  </div>
</footer>

<div class="taskbar d-flex justify-content-center align-items-center">
  <div class="weather d-flex align-items-center">
    <svg width="26" height="26" viewBox="0 0 26 26"><circle cx="13" cy="13" r="12" fill="url(#gs)"/></svg>
    <div><div>29°C</div><div class="cond" dir="rtl">مشمس</div></div>
  </div>
  <div class="dock d-flex align-items-center">
    <svg width="30" height="30" viewBox="0 0 30 30" fill="url(#gw)"><rect width="14.500" height="14.500" rx="1"/><rect x="15.500" width="14.500" height="14.500" rx="1"/><rect y="15.500" width="14.500" height="14.500" rx="1"/><rect x="15.500" y="15.500" width="14.500" height="14.500" rx="1"/></svg>
    <label class="searchpill d-flex align-items-center"><svg class="ic" viewBox="0 0 24 24"><circle cx="11" cy="11" r="7" stroke="#e8e8e8" stroke-width="2" fill="#555"/><path d="m16 16 5 5" stroke="#e8e8e8" stroke-width="2.500"/></svg><input placeholder="Search" aria-label="Search"></label>
    <button class="app" aria-label="Task view"><svg width="30" height="28" viewBox="0 0 30 28"><rect x="0" y="8" width="22" height="20" rx="1" fill="#6b6b6b"/><rect x="8" width="22" height="20" rx="1" fill="#e9e9e9"/><path d="M8 8h14v12H8z" fill="#aaa"/></svg></button>
    <button class="app" aria-label="Browser"><svg width="30" height="30" viewBox="0 0 30 30"><path d="M0 15C1-5 29-5 30 13c0 6-7 8-11 6 3-5-2-10-8-9C5 10 1 12 0 15z" fill="url(#ge)"/><path d="M0 15c3-5 12-6 15-1-4 3-1 11 12 9-6 9-26 9-27-8z" fill="#1b62b8"/><circle cx="8" cy="22" r="7.500" fill="#57443f"/><path d="m3 20 5-3 5 3-4 5z" fill="#c76b5e"/><path d="m4 26 9-5" stroke="#9fc0da" stroke-width="2"/></svg><i></i></button>
    <button class="app" aria-label="Chat"><svg width="32" height="32" viewBox="0 0 32 32"><path d="M2 30l2-8a13.500 13.500 0 1 1 5 5.500z" fill="none" stroke="#36cf69" stroke-width="2.800"/><path d="M10 9c2-2 3 0 4 3l-1 2c1 2 3 4 5 5l2-1.500c3 1 5 2 3 4-6 4-16-7-13-12.500z" fill="#36cf69"/></svg><i></i></button>
    <button class="app on" aria-label="Office"><svg width="30" height="32" viewBox="0 0 32 34"><circle cx="14" cy="19" r="11.500" fill="#f4380f"/><path d="M7 14.500h3.500l2.500 8 2.500-8h5l-3.500 9-2.500-6M8 14.500l3.500 9 2.500-6" fill="none" stroke="#fff" stroke-width="1.800"/><rect x="20" y="0" width="12" height="13" rx="1.500" fill="#36b866"/><path d="M29 3.500h-5.500v3h5v3.500H23" fill="none" stroke="#fff" stroke-width="1.500"/></svg><i></i></button>
  </div>
  <div class="tray d-flex align-items-center">
    <svg width="16" height="16" viewBox="0 0 16 16" fill="none" stroke="#fff" stroke-width="2"><path d="m2 11 6-6 6 6"/></svg>
    <span class="mx-4 px-2" lang="ar">ع</span>
    <svg class="me-2" width="22" height="20" viewBox="0 0 22 20" fill="none" stroke="#fff" stroke-width="1.700"><path d="M1.500 8C7 2 15 2 20.500 8M4.500 11.500c4-4.500 9-4.500 13 0M7.500 14.500c2.500-2.500 4.500-2.500 7 0"/><circle cx="11" cy="17" r="1.200" fill="#fff"/></svg>
    <svg class="me-2" width="22" height="20" viewBox="0 0 22 20" fill="none" stroke="#fff" stroke-width="1.500"><path d="M2 7.500h3L10 3v14l-5-4.500H2zM13 7c1.500 2 1.500 4 0 6M15.500 5c3 3 3 7 0 10"/><path d="M18 3c4 4 4 10 0 14" stroke="#666"/></svg>
    <svg class="me-4" width="24" height="20" viewBox="0 0 24 20" fill="none" stroke="#fff" stroke-width="1.600"><path d="M10 5h8a2 2 0 0 1 2 2v8a2 2 0 0 1-2 2H6M22 9v4"/><path d="M2 15C1 8 3 5 8 1c3 6 3 11-2 14zM2 18l4-7" fill="#fff"/></svg>
    <div class="text-end">10:04 AM<br>8/27/2025</div>
  </div>
</div>

<div class="wmark"><div class="wm1" dir="rtl">مستقل</div><div class="wm2">mostaql.com</div></div>

<script src="https://cdn.jsdelivr.net/npm/bootstrap@5.3.0/dist/js/bootstrap.bundle.min.js"></script>
<script>
const widths = [40, 66, 266, 108, 199, 442, ...Array(10).fill(82)];
const names = ['', ...'ABCDEFGHIJKLMNO'];
const S1 = 'م.الشهيد الرائد محمود سامي عبدالرحمن فتحي الاعداديه بنين';
const S2 = 'م.الشهيد المقدم شريف محمد عمر الاعداديه بنات';
const S3 = 'م.كليوباترا الرسميه الابتدائيه لغات';
const S4 = 'مزالابراهيميه الاعداديه بنات';
const S5 = 'م.كليوباترا الرياضيه الموحده';
const S6 = 'م.عباس العقاد الابتدائيه';
const S7 = 'مبني مديريه الاسكان';
const S8 = 'غير مدرج';
const data = [
  ['28506040201986', S1], ['28506052600665', S1], ['28506080200826', S1], ['28506090200042', S1],
  ['28506090200638', S2], ['28506100201191', S3], ['28506110201601', S4], ['28506120200751', S5],
  ['28506120200875', S6], ['28506120202533', S6], ['28506130200792', S5], ['28506138800918', S5],
  ['28506160200053', S7], ['28506160200096', S7], ['28506162501484', S1], ['28506210201927', S4],
  ['28506230201346', S6], ['28506250201342', S6], ['28506250202701', S8], ['28506262601494', S1],
  ['28506280200855', S1], ['28506290200896', 'م.عبدالله نديم'], ['28506290202244', S5], ['28507000102140', S8]
];
const blank = '<td></td>'.repeat(10);
document.getElementById('cols').innerHTML = widths.map(w => `<col style="width:${w}px">`).join('');
document.getElementById('letters').innerHTML = names.map((n, i) =>
  i ? `<th scope="col"${n === 'B' ? ' class="cur"' : ''}>${n}</th>`
    : '<th><svg class="ms-3" width="8" height="9" viewBox="0 0 9 10"><path d="M9 0v9H1z" fill="#666"/></svg></th>').join('');
const heads = ['م كاشف', 'اسم الكاشف', 'م', 'رقم البطاقه', 'المقر الانتخابى'];
let html = '<tr class="frozen"><th scope="row">1</th>' +
  heads.map(h => `<td class="hd arab" dir="rtl">${h}</td>`).join('') + blank + '</tr>';
data.forEach(([id, place], i) => {
  const r = i + 7;
  html += `<tr${i ? '' : ' class="cut"'}><th scope="row"${r === 8 ? ' class="cur"' : ''}>${r}</th><td></td>` +
    `<td class="b${r === 8 ? ' sel' : ''}"></td><td class="n">${33499 + r}</td><td class="id flag">${id}</td>` +
    `<td class="ar arab${r === 28 ? ' flag' : ''}" dir="rtl">${place}</td>${blank}</tr>`;
});
document.getElementById('rows').innerHTML = html;
</script>
</body>
</html>
